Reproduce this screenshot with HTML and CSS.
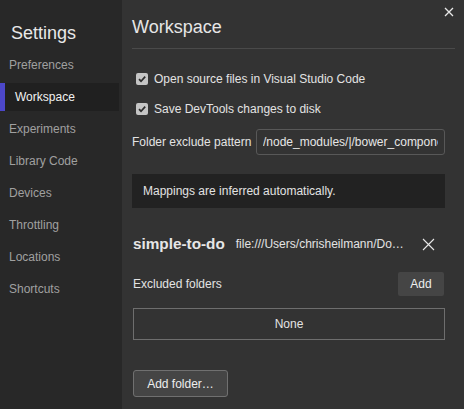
FILE: index.html
```html
<!DOCTYPE html>
<html>
<head>
<meta charset="utf-8">
<link rel="stylesheet" href="styles.css">
</head>
<body>
<div class="app">
  <aside class="sidebar">
    <div class="title">Settings</div>
    <nav class="nav">
      <div class="nav-item">Preferences</div>
      <div class="nav-item selected">Workspace</div>
      <div class="nav-item">Experiments</div>
      <div class="nav-item">Library Code</div>
      <div class="nav-item">Devices</div>
      <div class="nav-item">Throttling</div>
      <div class="nav-item">Locations</div>
      <div class="nav-item">Shortcuts</div>
    </nav>
  </aside>
  <main class="main">
    <button class="close" aria-label="Close">
      <svg width="10" height="10" viewBox="0 0 10 10"><path d="M1 1L9 9M9 1L1 9" stroke="#e8e8e8" stroke-width="1.3" fill="none"/></svg>
    </button>
    <header class="header"><h1>Workspace</h1></header>
    <div class="content">
      <label class="check-row">
        <span class="checkbox"><svg width="12" height="12" viewBox="0 0 12 12"><path d="M3 6.2L5 8.2L9.2 3.6" stroke="#2b2b2b" stroke-width="1.7" fill="none"/></svg></span>
        <span>Open source files in Visual Studio Code</span>
      </label>
      <label class="check-row">
        <span class="checkbox"><svg width="12" height="12" viewBox="0 0 12 12"><path d="M3 6.2L5 8.2L9.2 3.6" stroke="#2b2b2b" stroke-width="1.7" fill="none"/></svg></span>
        <span>Save DevTools changes to disk</span>
      </label>
      <div class="pattern-row">
        <span class="label">Folder exclude pattern</span>
        <input class="pattern-input" type="text" value="/node_modules/|/bower_components/">
      </div>
      <div class="notice">Mappings are inferred automatically.</div>
      <div class="project-row">
        <span class="project-name">simple-to-do</span>
        <span class="project-url">file:///Users/chrisheilmann/Do…</span>
        <span class="remove">
          <svg width="13" height="13" viewBox="0 0 13 13"><path d="M1 1L12 12M12 1L1 12" stroke="#e8e8e8" stroke-width="1.1" fill="none"/></svg>
        </span>
      </div>
      <div class="excluded-row">
        <span>Excluded folders</span>
        <button class="add-btn">Add</button>
      </div>
      <div class="none-box">None</div>
      <button class="add-folder">Add folder…</button>
    </div>
  </main>
</div>
</body>
</html>
```
FILE: styles.css
```css
* { box-sizing: border-box; }
html, body { margin: 0; padding: 0; }
body {
  width: 464px;
  height: 409px;
  overflow: hidden;
  font-family: "Liberation Sans", Arial, sans-serif;
  background: #333333;
  color: #e3e3e3;
  font-size: 12px;
}
.app { display: flex; height: 409px; }
.sidebar {
  width: 122px;
  flex: none;
  background: #282828;
}
.title {
  font-size: 18px;
  line-height: 22px;
  color: #e8e8e8;
  padding-left: 11px;
  margin-top: 22px;
  margin-bottom: 7px;
}
.nav { display: flex; flex-direction: column; gap: 4px; }
.nav-item {
  height: 28px;
  line-height: 28px;
  padding-left: 9px;
  margin-right: 3px;
  color: #a0a0a0;
  font-size: 12px;
}
.nav-item.selected {
  background: #202020;
  color: #f2f2f2;
  border-left: 5px solid #4c47c9;
  padding-left: 10px;
}
.main {
  flex: 1;
  position: relative;
  padding: 0 9px 0 10px;
}
.close {
  position: absolute;
  top: 7px;
  right: 10px;
  width: 10px;
  height: 10px;
  padding: 0;
  border: 0;
  background: none;
  display: flex;
}
.header {
  padding-top: 16px;
  padding-bottom: 10px;
  border-bottom: 1px solid #4a4a4a;
}
.header h1 {
  margin: 0;
  font-size: 18px;
  line-height: 22px;
  font-weight: normal;
  color: #e6e6e6;
}
.content {
  width: 313px;
  display: flex;
  flex-direction: column;
}
.check-row {
  display: flex;
  align-items: center;
  height: 20px;
  padding-left: 4px;
  gap: 6px;
  margin-top: 10px;
}
.check-row:first-child { margin-top: 20px; }
.checkbox {
  width: 12px;
  height: 12px;
  border-radius: 2px;
  background: #c4c4c4;
  display: flex;
}
.pattern-row {
  display: flex;
  align-items: center;
  margin-top: 10px;
  gap: 4px;
}
.pattern-input {
  width: 189px;
  height: 26px;
  margin-left: auto;
  background: #333333;
  border: 1px solid #585858;
  border-radius: 3px;
  color: #e6e6e6;
  font-family: "Liberation Sans", Arial, sans-serif;
  font-size: 12px;
  padding: 0 6px;
  outline: none;
}
.notice {
  margin-top: 19px;
  height: 34px;
  line-height: 34px;
  background: #222222;
  padding-left: 11px;
  color: #e3e3e3;
}
.project-row {
  display: flex;
  align-items: center;
  margin-top: 22px;
  height: 28px;
  padding-left: 1px;
}
.project-name {
  font-weight: bold;
  font-size: 15.3px;
  color: #e6e6e6;
}
.project-url {
  margin-left: 11px;
  white-space: nowrap;
  color: #e3e3e3;
}
.remove {
  margin-left: auto;
  margin-right: 10px;
  display: flex;
}
.excluded-row {
  display: flex;
  align-items: center;
  justify-content: space-between;
  margin-top: 14px;
  padding-left: 1px;
}
.add-btn {
  width: 46px;
  height: 24px;
  border: 0;
  border-radius: 2px;
  background: #454545;
  color: #eeeeee;
  font-family: "Liberation Sans", Arial, sans-serif;
  font-size: 12px;
  padding: 0;
  margin-right: 1px;
}
.none-box {
  margin-top: 12px;
  margin-left: 1px;
  height: 32px;
  line-height: 30px;
  border: 1px solid #6e6e6e;
  text-align: center;
  color: #e3e3e3;
}
.add-folder {
  align-self: flex-start;
  margin-top: 30px;
  margin-left: 1px;
  width: 95px;
  height: 27px;
  background: #454545;
  border: 1px solid #707070;
  border-radius: 3px;
  color: #eeeeee;
  font-family: "Liberation Sans", Arial, sans-serif;
  font-size: 12px;
  padding: 0;
}
```
